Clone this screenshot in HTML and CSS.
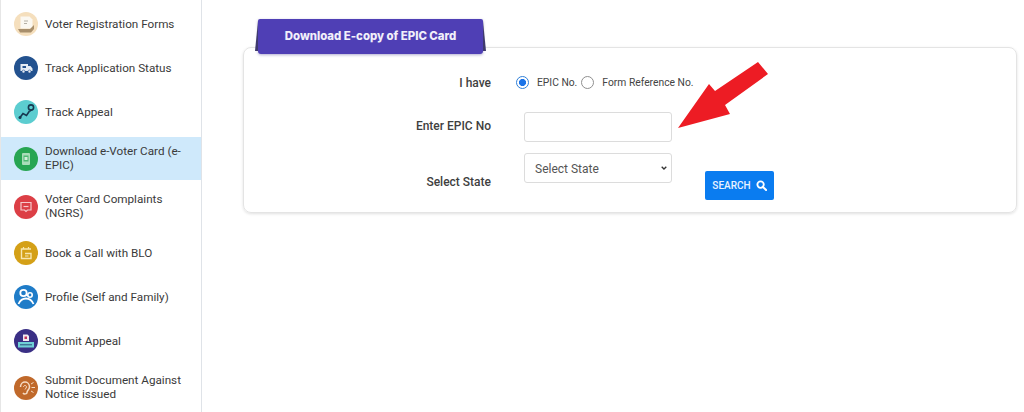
FILE: index.html
```html
<!DOCTYPE html>
<html lang="en">
<head>
  <meta charset="UTF-8">
  <title>Download e-Voter Card</title>
  <link rel="stylesheet" href="styles.css">
</head>
<body>
  <div class="page">
    <div class="sidebar">
      <div class="menu-item">
        <svg class="menu-icon" viewBox="0 0 24 24"><circle cx="12" cy="12" r="12" fill="#f5dfbd"/><path d="M6.500 4.500h9l3 3v9h-12z" fill="#fbf8f1"/><path d="M4 17h12l4-4v4l-3 3.500H6z" fill="#a88f6c"/><path d="M10 9h4M10 11.500h3" stroke="#b5b0a5" stroke-width="1"/></svg>
        <span>Voter Registration Forms</span>
      </div>
      <div class="menu-item">
        <svg class="menu-icon" viewBox="0 0 24 24"><circle cx="12" cy="12" r="12" fill="#23528f"/><path d="M6.500 8h7.500v7H6.500zM14 10h2.500l2 2.500V15H14z" fill="#e4ebf4"/><rect x="8.500" y="10" width="3.500" height="2" fill="#23528f"/><circle cx="9.500" cy="15.500" r="1.500" fill="#e4ebf4" stroke="#23528f" stroke-width=".6"/><circle cx="15.500" cy="15.500" r="1.500" fill="#e4ebf4" stroke="#23528f" stroke-width=".6"/></svg>
        <span>Track Application Status</span>
      </div>
      <div class="menu-item">
        <svg class="menu-icon" viewBox="0 0 24 24"><circle cx="12" cy="12" r="12" fill="#5ccdd0"/><path d="M6 17.500l3-4 3.500 2 3-4.500" fill="none" stroke="#17384f" stroke-width="1.600"/><circle cx="6" cy="17.500" r="1.500" fill="#17384f"/><circle cx="17" cy="7.500" r="2.600" fill="none" stroke="#17384f" stroke-width="1.600"/><path d="M15.500 10l1 2 1.500-2z" fill="#17384f"/></svg>
        <span>Track Appeal</span>
      </div>
      <div class="menu-item two-line active">
        <svg class="menu-icon" viewBox="0 0 24 24"><circle cx="12" cy="12" r="12" fill="#27a552"/><rect x="8" y="6" width="8" height="12" rx="1" fill="#a9dcb8"/><rect x="9.500" y="8.500" width="5" height="6" fill="#4fb972"/><rect x="10.500" y="10" width="3" height="3" fill="#d3eedb"/></svg>
        <span>Download e-Voter Card (e-EPIC)</span>
      </div>
      <div class="menu-item two-line second">
        <svg class="menu-icon" viewBox="0 0 24 24"><circle cx="12" cy="12" r="12" fill="#dc3f46"/><path d="M7 7.500h10v7.500h-3.500l-1.500 1.500-1.500-1.500H7z" fill="none" stroke="#f6c9cb" stroke-width="1.200"/><path d="M9.500 11.500h5" stroke="#f6c9cb" stroke-width="1.200"/></svg>
        <span>Voter Card Complaints (NGRS)</span>
      </div>
      <div class="menu-item">
        <svg class="menu-icon" viewBox="0 0 24 24"><circle cx="12" cy="12" r="12" fill="#d4a017"/><path d="M17 8H7.500v9.500H17v-5h-6" fill="none" stroke="#f7e6b0" stroke-width="1.400"/><path d="M9.500 6v2M14.500 6v2" stroke="#f7e6b0" stroke-width="1.200"/><path d="M11 15h3.500" stroke="#f7e6b0"/></svg>
        <span>Book a Call with BLO</span>
      </div>
      <div class="menu-item">
        <svg class="menu-icon" viewBox="0 0 24 24"><circle cx="12" cy="12" r="12" fill="#1f7cc8"/><circle cx="9.500" cy="8" r="3.200" fill="none" stroke="#fff" stroke-width="1.800"/><circle cx="16" cy="10" r="2.200" fill="none" stroke="#fff" stroke-width="1.600"/><path d="M12 10l2 .5" stroke="#fff" stroke-width="1.500"/><path d="M4.500 19c1.500-3.500 4-5.500 7.500-5.500s6 2 7.500 5.500" fill="none" stroke="#fff" stroke-width="1.800"/></svg>
        <span>Profile (Self and Family)</span>
      </div>
      <div class="menu-item">
        <svg class="menu-icon" viewBox="0 0 24 24"><circle cx="12" cy="12" r="12" fill="#3a2f85"/><rect x="4" y="13" width="16" height="5.500" fill="#6fd0d6"/><path d="M9 12V5.500h4.500L15 7v5z" fill="#f2e9ef"/><rect x="10.500" y="7.500" width="2.500" height="2.500" fill="#c2305a"/><path d="M6 15.800h12" stroke="#2b4f7c"/></svg>
        <span>Submit Appeal</span>
      </div>
      <div class="menu-item two-line last">
        <svg class="menu-icon" viewBox="0 0 24 24"><circle cx="12" cy="12" r="12" fill="#c0692b"/><path d="M6.500 11c0-3.500 2.500-5 4.500-5s4.500 1.500 4.500 5c0 2.500-2.500 3.500-2.500 5.500 0 1.500-3 2-4 .5" fill="none" stroke="#f6dcc4" stroke-width="1.500"/><path d="M9.500 11c0-2 3-2 3 0 0 1-1 1.200-1.500 2.500" fill="none" stroke="#f6dcc4"/><path d="M17 8l2.500-1.500M17.500 11.500H21M17 15l2.500 1.500" stroke="#f6dcc4"/></svg>
        <span>Submit Document Against Notice issued</span>
      </div>
    </div>

    <div class="main">
      <div class="tab">Download E-copy of EPIC Card</div>
      <div class="card">
        <div class="field-labels">
          <div class="label label-have">I have</div>
          <div class="label label-epic">Enter EPIC No</div>
          <div class="label label-state">Select State</div>
        </div>
        <div class="fields">
          <div class="radios">
            <input class="radio" type="radio" name="kind" checked>
            <span class="radio-text">EPIC No.</span>
            <input class="radio" type="radio" name="kind">
            <span class="radio-text">Form Reference No.</span>
          </div>
          <input class="text-input" type="text">
          <select class="state-select"><option>Select State</option></select>
        </div>
        <button class="search-btn">SEARCH
          <svg class="search-icon" viewBox="0 0 24 24"><circle cx="10" cy="10" r="7" fill="none" stroke="#fff" stroke-width="4"/><path d="M15 15l7 7" stroke="#fff" stroke-width="4.500" stroke-linecap="round"/></svg>
        </button>
        <svg class="arrow" viewBox="0 0 91 67"><polygon points="0,67 31,23 37,30 80,1 90,13 47,44 52,53" fill="#ed1c24"/></svg>
      </div>
    </div>
  </div>
</body>
</html>
```

FILE: styles.css
```css
html, body {
  margin: 0;
  height: 412px;
  overflow: hidden;
  background-color: #fff;
}
body {
  font-family: Roboto, "Liberation Sans", sans-serif;
  color: #333;
}
.page {
  display: flex;
  height: 412px;
}
.sidebar {
  width: 202px;
  padding-top: 2px;
  border-left: 1px solid #e6e6e6;
  border-right: 1px solid #dfe3e8;
  box-sizing: border-box;
  flex-shrink: 0;
}
.menu-item {
  display: flex;
  align-items: center;
  gap: 7px;
  height: 44px;
  padding-left: 13px;
  font-size: 11.700px;
  line-height: 14px;
  color: #3a3a3a;
}
.menu-item.two-line {
  height: 43px;
  margin-top: 3px;
  margin-bottom: 3px;
}
.menu-item.two-line span {
  padding-bottom: 2px;
}
.menu-item.second {
  margin-top: 5px;
}
.menu-item.last {
  margin-top: 3px;
}
.menu-item.active {
  background-color: #cfe9fb;
}
.menu-icon {
  width: 24px;
  height: 24px;
  flex-shrink: 0;
}
.main {
  flex: 1;
  padding: 19px 7px 0 41px;
}
.tab {
  position: relative;
  z-index: 1;
  width: 225px;
  height: 35px;
  margin: 0 0 -7px 15px;
  background-color: #4f3fb5;
  border-radius: 2px 2px 3px 3px;
  box-shadow: 0 1px 3px rgba(60, 50, 140, .4);
  color: #f1effa;
  font-family: Inter, "Open Sans", sans-serif;
  font-size: 11.400px;
  font-weight: 800;
  line-height: 35px;
  text-align: center;
}
.tab::before, .tab::after {
  content: "";
  position: absolute;
  top: 2px;
  bottom: 3px;
  width: 3px;
  background-color: #3f3a6e;
}
.tab::before {
  left: -3px;
  clip-path: polygon(100% 0, 100% 100%, 0 100%);
}
.tab::after {
  right: -3px;
  clip-path: polygon(0 0, 100% 100%, 0 100%);
}
.card {
  position: relative;
  display: flex;
  height: 166px;
  box-sizing: border-box;
  border: 1px solid #e4e4e4;
  border-radius: 8px;
  box-shadow: 0 1px 3px rgba(0, 0, 0, .12);
}
.field-labels {
  width: 247px;
  padding-top: 28px;
  text-align: right;
}
.label {
  font-size: 12px;
  font-weight: 500;
  line-height: 14px;
  color: #3f3f3f;
}
.label-epic {
  margin-top: 29px;
}
.label-state {
  margin-top: 42px;
}
.fields {
  display: flex;
  flex-direction: column;
  width: 148px;
  margin-left: 33px;
  padding-top: 27px;
}
.radios {
  display: flex;
  align-items: center;
  height: 14px;
  margin-left: -8px;
  white-space: nowrap;
  font-size: 10.300px;
  color: #444;
}
.radio {
  appearance: none;
  flex: none;
  width: 13px;
  height: 13px;
  margin: 0 8px 0 0;
  box-sizing: border-box;
  border: 1px solid #8f8f8f;
  border-radius: 50%;
  background-color: #fff;
}
.radio:checked {
  border: 1.500px solid #2f7fd8;
  background: radial-gradient(circle, #1a73e8 0 3.300px, #fff 3.800px);
}
.radio-text {
  margin-right: 4px;
}
.text-input {
  width: 148px;
  height: 30px;
  margin-top: 23px;
  box-sizing: border-box;
  border: 1px solid #dcdcdc;
  border-radius: 3px;
}
.state-select {
  appearance: none;
  width: 148px;
  height: 30px;
  margin-top: 11px;
  padding: 2px 0 0 10px;
  box-sizing: border-box;
  border: 1px solid #dcdcdc;
  border-radius: 3px;
  background: #fff url("data:image/svg+xml,%3Csvg xmlns='http://www.w3.org/2000/svg' width='6' height='4'%3E%3Cpath d='M.7.7 3 3l2.300-2.300' fill='none' stroke='%23333' stroke-width='1.300'/%3E%3C/svg%3E") no-repeat right 4px center;
  font-family: Roboto, sans-serif;
  font-size: 12px;
  color: #555;
}
.search-btn {
  display: flex;
  align-items: center;
  justify-content: center;
  gap: 5px;
  align-self: flex-start;
  width: 69px;
  height: 29px;
  margin: 123px 0 0 33px;
  padding: 0;
  border: 0;
  border-radius: 2px;
  background-color: #0a7cf0;
  color: #e8f2ff;
  font-family: Roboto, sans-serif;
  font-size: 10px;
  font-weight: 500;
}
.search-icon {
  width: 11px;
  height: 11px;
}
.arrow {
  position: absolute;
  left: 434px;
  top: 13px;
  width: 91px;
  height: 67px;
}
```
